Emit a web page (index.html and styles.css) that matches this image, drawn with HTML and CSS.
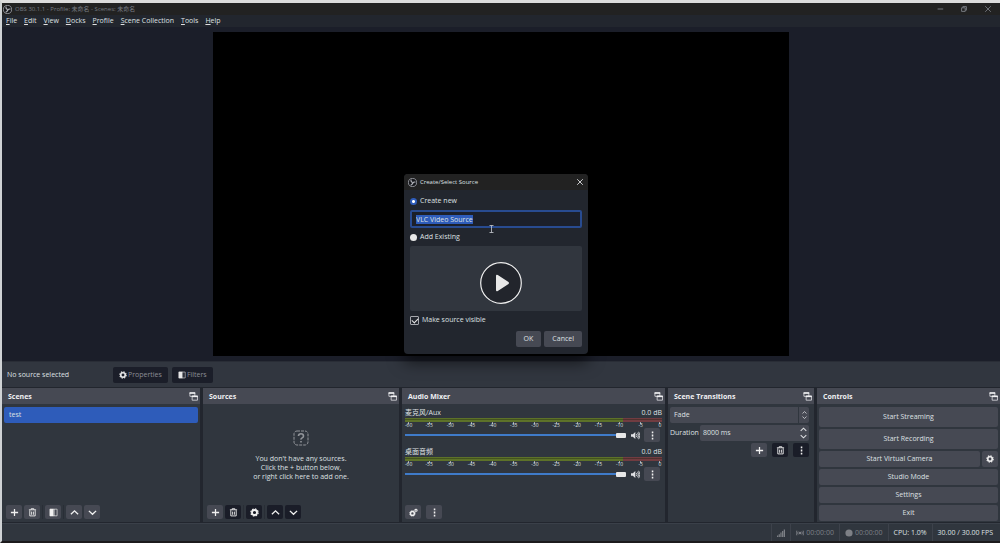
FILE: index.html
```html
<!DOCTYPE html>
<html lang="en">
<head>
    <meta charset="UTF-8">
    <meta name="viewport" content="width=device-width, initial-scale=1.0">
    <title>OBS 30.1.1</title>
    <link rel="stylesheet" href="styles.css">
</head>
<body>

    <!-- shared icons -->
    <svg class="sprite" aria-hidden="true">
        <symbol id="obs" viewBox="0 0 20 20">
            <circle cx="10" cy="10" r="9" fill="#15161a" stroke="currentColor" stroke-width="1.6"/>
            <path d="M7.500 3.500C5.500 6 7 9 10 9.500M16.500 9.500C13.500 8 10.500 9.500 10.500 12.500M5.500 15.500c3 .500 5-2 4-5" fill="none" stroke="currentColor" stroke-width="2.400"/>
        </symbol>
        <symbol id="plus" viewBox="0 0 10 10">
            <path d="M5 1v8M1 5h8" stroke="currentColor" stroke-width="1.400"/>
        </symbol>
        <symbol id="trash" viewBox="0 0 10 10">
            <path d="M1 2h8M3.500 2V.8h3V2M2 2.500v6.300h6V2.500M4 4v3.500M6 4v3.500" fill="none" stroke="currentColor"/>
        </symbol>
        <symbol id="filter" viewBox="0 0 10 10">
            <path d="M1 1h4v8H1z" fill="currentColor"/>
            <path d="M5 1h1.500v8H5z" fill="currentColor" opacity=".5"/>
            <path d="M1 1.300h8v7.400H1z" fill="none" stroke="currentColor" stroke-width=".7"/>
        </symbol>
        <symbol id="up" viewBox="0 0 10 10">
            <path d="M1 7 5 3.200 9 7" fill="none" stroke="currentColor" stroke-width="1.500"/>
        </symbol>
        <symbol id="down" viewBox="0 0 10 10">
            <path d="M1 3.200 5 7l4-3.800" fill="none" stroke="currentColor" stroke-width="1.500"/>
        </symbol>
        <symbol id="gear" viewBox="0 0 10 10">
            <circle cx="5" cy="5" r="2.800" fill="none" stroke="currentColor" stroke-width="2"/>
            <circle cx="5" cy="5" r="4" fill="none" stroke="currentColor" stroke-width="1.400" stroke-dasharray="1.700 1.440"/>
        </symbol>
        <symbol id="gears" viewBox="0 0 10 10">
            <circle cx="3.800" cy="6" r="2.100" fill="none" stroke="currentColor" stroke-width="1.600"/>
            <circle cx="3.800" cy="6" r="3.100" fill="none" stroke="currentColor" stroke-dasharray="1.200 1.230"/>
            <circle cx="7.800" cy="2.500" r="1.200" fill="none" stroke="currentColor" stroke-width="1.200"/>
        </symbol>
        <symbol id="dots" viewBox="0 0 10 10">
            <path d="M4.200.5h1.700v2H4.200zM4.200 4h1.700v2H4.200zM4.200 7.500h1.700v2H4.200z" fill="currentColor"/>
        </symbol>
        <symbol id="float" viewBox="0 0 10 10">
            <path d="M1 .8h5.500v4H1z" fill="none" stroke="currentColor" stroke-width=".8"/>
            <path d="M.6.400h6.300v1.600H.6z" fill="currentColor"/>
            <path d="M3.500 4.500h5.900v4.600H3.500z" fill="#464953" stroke="currentColor" stroke-width=".8"/>
            <path d="M3.100 4.100h6.700v1.600H3.100z" fill="currentColor"/>
        </symbol>
        <symbol id="close" viewBox="0 0 10 10">
            <path d="m1.500 1.500 7 7m0-7-7 7" stroke="currentColor" stroke-width="1.100"/>
        </symbol>
        <symbol id="speaker" viewBox="0 0 10 10">
            <path d="M0 3.500h2L4.800 1v8L2 6.500H0z" fill="currentColor"/>
            <path d="M6 3.300q1.400 1.700 0 3.400M7.300 2q2.500 3 0 6M8.500.9q3 4 0 8.200" fill="none" stroke="currentColor"/>
        </symbol>
    </svg>

    <header class="titlebar">
        <svg class="logo"><use href="#obs"/></svg>
        <span class="window-title">OBS 30.1.1 - Profile: 未命名 - Scenes: 未命名</span>
        <div class="window-buttons">
            <button aria-label="Minimize"><svg viewBox="0 0 10 10"><path d="M2 5h7" stroke="currentColor" stroke-width="1.200"/></svg></button>
            <button aria-label="Restore"><svg viewBox="0 0 10 10"><path d="M2 3.500h4.500V8H2zM3.500 3.500V2H8v4.500H6.500" fill="none" stroke="currentColor" stroke-width="1.200"/></svg></button>
            <button aria-label="Close"><svg><use href="#close"/></svg></button>
        </div>
    </header>

    <nav class="menu">
        <a href="#"><u>F</u>ile</a>
        <a href="#"><u>E</u>dit</a>
        <a href="#"><u>V</u>iew</a>
        <a href="#"><u>D</u>ocks</a>
        <a href="#"><u>P</u>rofile</a>
        <a href="#"><u>S</u>cene Collection</a>
        <a href="#"><u>T</u>ools</a>
        <a href="#"><u>H</u>elp</a>
    </nav>

    <main class="preview">
        <div class="canvas"></div>
    </main>

    <div class="context-bar">
        <span class="context-name">No source selected</span>
        <button class="context-button"><svg><use href="#gear"/></svg>Properties</button>
        <button class="context-button"><svg><use href="#filter"/></svg>Filters</button>
    </div>

    <div class="docks">
        <section class="dock">
            <h2>Scenes <svg><use href="#float"/></svg></h2>
            <ul class="scene-list">
                <li>test</li>
            </ul>
            <div class="toolbar">
                <button class="tool" aria-label="Add scene"><svg><use href="#plus"/></svg></button>
                <button class="tool" aria-label="Remove scene"><svg><use href="#trash"/></svg></button>
                <span class="split"></span>
                <button class="tool" aria-label="Scene filters"><svg><use href="#filter"/></svg></button>
                <span class="split"></span>
                <button class="tool" aria-label="Move up"><svg><use href="#up"/></svg></button>
                <button class="tool" aria-label="Move down"><svg><use href="#down"/></svg></button>
            </div>
        </section>

        <section class="dock">
            <h2>Sources <svg><use href="#float"/></svg></h2>
            <div class="empty">
                <svg viewBox="0 0 16 16">
                    <rect x="1" y="1" width="14" height="14" rx="3" fill="none" stroke="currentColor" stroke-dasharray="3 1"/>
                    <path d="M5.500 6q0-2.300 2.500-2.300T10.500 6q0 1.200-1.300 1.900T8 9.600M8 11v1.600" fill="none" stroke="currentColor" stroke-width="1.600"/>
                </svg>
                <p>You don't have any sources.<br>Click the + button below,<br>or right click here to add one.</p>
            </div>
            <div class="toolbar">
                <button class="tool" aria-label="Add source"><svg><use href="#plus"/></svg></button>
                <button class="tool dark" aria-label="Remove source"><svg><use href="#trash"/></svg></button>
                <span class="split"></span>
                <button class="tool dark" aria-label="Source properties"><svg><use href="#gear"/></svg></button>
                <span class="split"></span>
                <button class="tool dark" aria-label="Move up"><svg><use href="#up"/></svg></button>
                <button class="tool dark" aria-label="Move down"><svg><use href="#down"/></svg></button>
            </div>
        </section>

        <section class="dock">
            <h2>Audio Mixer <svg><use href="#float"/></svg></h2>
            <div class="mixer">
                <div class="channel">
                    <div class="channel-head"><label for="mic">麦克风/Aux</label><span>0.0 dB</span></div>
                    <div class="meter"></div>
                    <div class="scale"><span>-60</span><span>-55</span><span>-50</span><span>-45</span><span>-40</span><span>-35</span><span>-30</span><span>-25</span><span>-20</span><span>-15</span><span>-10</span><span>-5</span><span>0</span></div>
                    <div class="volume">
                        <input type="range" id="mic" value="100">
                        <button class="mute" aria-label="Mute"><svg><use href="#speaker"/></svg></button>
                        <button class="tool" aria-label="Channel options"><svg><use href="#dots"/></svg></button>
                    </div>
                </div>
                <div class="channel">
                    <div class="channel-head"><label for="desktop">桌面音频</label><span>0.0 dB</span></div>
                    <div class="meter"></div>
                    <div class="scale"><span>-60</span><span>-55</span><span>-50</span><span>-45</span><span>-40</span><span>-35</span><span>-30</span><span>-25</span><span>-20</span><span>-15</span><span>-10</span><span>-5</span><span>0</span></div>
                    <div class="volume">
                        <input type="range" id="desktop" value="100">
                        <button class="mute" aria-label="Mute"><svg><use href="#speaker"/></svg></button>
                        <button class="tool" aria-label="Channel options"><svg><use href="#dots"/></svg></button>
                    </div>
                </div>
            </div>
            <div class="toolbar wide">
                <button class="tool" aria-label="Advanced audio"><svg><use href="#gears"/></svg></button>
                <button class="tool" aria-label="Mixer menu"><svg><use href="#dots"/></svg></button>
            </div>
        </section>

        <section class="dock">
            <h2>Scene Transitions <svg><use href="#float"/></svg></h2>
            <div class="transitions">
                <div class="select-box">
                    <select aria-label="Transition">
                        <option>Fade</option>
                    </select>
                    <span class="arrows"><svg><use href="#up"/></svg><svg><use href="#down"/></svg></span>
                </div>
                <div class="duration">
                    <label for="duration">Duration</label>
                    <div class="spin-box">
                        <input type="text" id="duration" value="8000 ms">
                        <span class="arrows"><svg><use href="#up"/></svg><svg><use href="#down"/></svg></span>
                    </div>
                </div>
                <div class="transition-tools">
                    <button class="tool" aria-label="Add transition"><svg><use href="#plus"/></svg></button>
                    <button class="tool dark" aria-label="Remove transition"><svg><use href="#trash"/></svg></button>
                    <button class="tool dark" aria-label="Transition options"><svg><use href="#dots"/></svg></button>
                </div>
            </div>
        </section>

        <section class="dock">
            <h2>Controls <svg><use href="#float"/></svg></h2>
            <div class="controls">
                <button class="tall">Start Streaming</button>
                <button class="tall">Start Recording</button>
                <div class="camera">
                    <button>Start Virtual Camera</button>
                    <button aria-label="Virtual camera settings"><svg><use href="#gear"/></svg></button>
                </div>
                <button>Studio Mode</button>
                <button>Settings</button>
                <button>Exit</button>
            </div>
        </section>
    </div>

    <footer class="status">
        <span class="muted"><svg viewBox="0 0 10 10"><path d="M0 8h1.500v2H0zM2.100 6.500h1.500V10H2.100zM4.200 4.500h1.500V10H4.200zM6.300 2.500h1.500V10H6.300zM8.400.5H10V10H8.400z" fill="currentColor"/></svg></span>
        <span class="muted"><svg viewBox="0 0 10 10"><circle cx="5" cy="5" r="1.700" fill="currentColor"/><path d="M2.700 3q-1.500 2 0 4M7.300 3q1.500 2 0 4M1 2q-1.500 3 0 6M9 2q1.500 3 0 6" fill="none" stroke="currentColor"/></svg>00:00:00</span>
        <span class="muted"><svg viewBox="0 0 10 10"><circle cx="5" cy="5" r="4.500" fill="currentColor"/></svg>00:00:00</span>
        <span>CPU: 1.0%</span>
        <span>30.00 / 30.00 FPS</span>
    </footer>

    <form class="dialog" role="dialog" aria-labelledby="dialog-title">
        <div class="dialog-title">
            <svg class="logo"><use href="#obs"/></svg>
            <span id="dialog-title">Create/Select Source</span>
            <button type="button" aria-label="Close dialog"><svg><use href="#close"/></svg></button>
        </div>
        <div class="dialog-body">
            <label class="choice"><input type="radio" name="mode" checked>Create new</label>
            <div class="name-field">
                <input type="text" aria-label="Source name" value="VLC Video Source" id="source-name">
            </div>
            <label class="choice"><input type="radio" name="mode">Add Existing</label>
            <div class="existing">
                <svg viewBox="0 0 42 42">
                    <circle cx="21" cy="21" r="20.300" fill="#22252c" stroke="#f0f0f0" stroke-width="1.200"/>
                    <path d="M16 14q0-2 1.800-1L28.500 20q1.200 1 0 2l-10.700 7q-1.800 1-1.800-1z" fill="#e8e8e8"/>
                </svg>
            </div>
            <label class="choice visible"><input type="checkbox" checked>Make source visible</label>
            <div class="dialog-buttons">
                <button type="button">OK</button>
                <button type="button">Cancel</button>
            </div>
        </div>
        <svg class="cursor" viewBox="0 0 5 8"><path d="M.5.500h4M2.500.500v7M.5 7.500h4" stroke="#c8cbd2" stroke-width=".8"/></svg>
    </form>

    <script>
        onload=function(){
            document.getElementById("source-name").select();
        }
    </script>
</body>
</html>
```
FILE: styles.css
```css
* {
    box-sizing: border-box;
}

body {
    font-family: "Open Sans", "Noto Sans CJK SC", sans-serif;
    font-size: 7px;
    line-height: 10px;
    margin: 0;
    height: 100vh;
    display: flex;
    flex-direction: column;
    background-color: #22262e;
    color: #dfe0e3;
    border-top: 3px solid #dcdcdc;
    border-left: 2px solid #cfd2d4;
    border-bottom: 2px solid #1c1a1c;
    overflow: hidden;
}

button, input, select {
    font: inherit;
    color: inherit;
    border: none;
    margin: 0;
    padding: 0;
    background: none;
}

button {
    display: flex;
    align-items: center;
    justify-content: center;
}

svg {
    width: 9px;
    height: 9px;
    flex: none;
}

.sprite {
    position: absolute;
    width: 0;
    height: 0;
}

/* Title bar and menu */
.titlebar {
    display: flex;
    align-items: center;
    height: 12px;
    padding-left: 1px;
    gap: 3px;
    font-size: 6px;
    background-color: #222222;
    color: #777b82;
}

.logo {
    width: 9px;
    height: 9px;
    color: #b8bac0;
}

.window-buttons {
    display: flex;
    gap: 16px;
    margin-left: auto;
    padding-right: 8px;
}

.window-buttons svg {
    width: 8px;
    height: 8px;
}

.menu {
    display: flex;
    align-items: center;
    height: 12px;
    padding-left: 4px;
    gap: 7px;
    background-color: #22262e;
}

.menu a {
    color: inherit;
    text-decoration: none;
}

/* Preview */
.preview {
    flex: 1;
    min-height: 0;
    display: flex;
    justify-content: center;
    padding: 5px 0;
    background-color: #1b1e29;
}

.canvas {
    height: 100%;
    aspect-ratio: 16 / 9;
    background-color: #000;
}

.context-bar {
    display: flex;
    align-items: center;
    height: 26px;
    padding-left: 5px;
    gap: 4px;
    background-color: #31363f;
    border-top: 1px solid #292d36;
}

.context-name {
    width: 102px;
}

.context-button {
    height: 16px;
    padding: 0 6px;
    gap: 1px;
    border-radius: 2px;
    background-color: #1b1e29;
    color: #8b8e95;
}

.context-button svg {
    width: 8px;
    height: 8px;
    color: #e8e8e8;
}

/* Docks */
.docks {
    display: grid;
    grid-template-columns: 198fr 196fr 263fr 146fr 183fr;
    gap: 3px;
    height: 136px;
    padding: 1px 0;
}

.dock {
    display: flex;
    flex-direction: column;
    min-width: 0;
    background-color: #30363e;
}

.dock h2 {
    display: flex;
    align-items: center;
    justify-content: space-between;
    height: 16px;
    margin: 0;
    padding: 1px 2px 0 6px;
    font-size: 7px;
    font-weight: 700;
    background-color: #464953;
    color: #f0f0f2;
}

.scene-list {
    flex: 1;
    margin: 0;
    padding: 3px 2px;
    list-style: none;
}

.scene-list li {
    height: 16px;
    padding: 3px 5px;
    border-radius: 2px;
    background-color: #2e5cba;
}

.toolbar {
    display: flex;
    align-items: center;
    gap: 2px;
    padding: 0 4px 3px;
}

.toolbar.wide {
    gap: 5px;
    padding-left: 3px;
}

.tool {
    width: 16px;
    height: 14px;
    border-radius: 2px;
    background-color: #464953;
    color: #f0f0f0;
}

.tool.dark {
    background-color: #1a1d28;
}

.split {
    width: 1px;
    height: 14px;
    background-color: #292e36;
}

.empty {
    flex: 1;
    display: flex;
    flex-direction: column;
    align-items: center;
    justify-content: center;
    padding-top: 2px;
    text-align: center;
}

.empty svg {
    width: 16px;
    height: 16px;
    color: #92959a;
}

.empty p {
    margin: 8px 0 0;
    line-height: 9px;
}

/* Audio mixer */
.mixer {
    flex: 1;
    padding: 4px 3px 0;
}

.channel {
    height: 39px;
}

.channel-head {
    display: flex;
    justify-content: space-between;
}

.meter {
    height: 4px;
    background:
        linear-gradient(transparent 1px, rgba(20, 28, 10, 0.35) 1px, rgba(20, 28, 10, 0.35) 2px, transparent 2px),
        linear-gradient(90deg, #5d7229 85%, #713c41 85%);
}

.scale {
    display: flex;
    justify-content: space-between;
    height: 6px;
    font-size: 5px;
    line-height: 7px;
}

.scale span {
    width: 8px;
    text-align: center;
    background: linear-gradient(#a0a3a8, #a0a3a8) center top / 1px 2px no-repeat;
}

.scale span:first-child {
    width: 7px;
}

.scale span:last-child {
    width: 4px;
}

.volume {
    display: flex;
    align-items: center;
    height: 14px;
    padding-right: 2px;
}

.volume input {
    flex: 1;
    min-width: 0;
    height: 5px;
    appearance: none;
    background: linear-gradient(#3f7bc9, #3f7bc9) center / 100% 2px no-repeat;
}

.volume input::-webkit-slider-thumb {
    appearance: none;
    width: 10px;
    height: 5px;
    border-radius: 1px;
    background-color: #e8e8e8;
}

.mute {
    width: 18px;
}

/* Transitions */
.transitions {
    display: flex;
    flex-direction: column;
    gap: 2px;
    padding: 3px 5px 0 2px;
}

.select-box, .spin-box {
    display: flex;
    align-items: center;
    height: 16px;
    border-radius: 2px;
    background-color: #464953;
}

.select-box select {
    flex: 1;
    height: 16px;
    padding-left: 4px;
    appearance: none;
    border-right: 1px solid #30363e;
}

.arrows {
    display: flex;
    flex-direction: column;
    align-items: center;
    width: 10px;
}

.arrows svg {
    width: 5px;
    height: 5px;
}

.duration {
    display: flex;
    align-items: center;
    gap: 1px;
}

.spin-box {
    flex: 1;
    min-width: 0;
}

.spin-box input {
    flex: 1;
    min-width: 0;
    padding-left: 3px;
}

.spin-box .arrows {
    width: 12px;
}

.spin-box svg {
    width: 7px;
    height: 7px;
}

.transition-tools {
    display: flex;
    justify-content: flex-end;
    gap: 5px;
}

/* Controls */
.controls {
    display: flex;
    flex-direction: column;
    gap: 2px;
    padding: 3px 2px 0;
}

.controls button {
    height: 16px;
    border-radius: 2px;
    background-color: #464953;
}

.controls .tall {
    height: 20px;
}

.camera {
    display: grid;
    grid-template-columns: 1fr 16px;
    gap: 2px;
}

.camera svg {
    width: 8px;
    height: 8px;
    color: #f0f0f0;
}

/* Status bar */
.status {
    display: flex;
    justify-content: flex-end;
    height: 18px;
    padding-right: 2px;
    background-color: #30363e;
    border-top: 1px solid #3a4049;
}

.status span {
    display: flex;
    align-items: center;
    gap: 2px;
    padding: 0 5px;
    border-left: 1px solid #3d424b;
}

.status .muted {
    color: #7d8086;
}

.status svg {
    width: 8px;
    height: 8px;
}

/* Create source dialog */
.dialog {
    position: absolute;
    left: calc(50% - 96px);
    top: 174px;
    width: 184px;
    border-radius: 4px;
    overflow: hidden;
    background-color: #22262e;
    box-shadow: 0 8px 16px rgba(0, 0, 0, 0.6);
}

.dialog-title {
    display: flex;
    align-items: center;
    height: 16px;
    padding: 0 4px;
    gap: 3px;
    font-size: 6px;
    background-color: #222222;
}

.dialog-title button {
    margin-left: auto;
}

.dialog-title button svg {
    width: 8px;
    height: 8px;
}

.dialog-body {
    padding: 5px 6px 7px;
}

.choice {
    display: flex;
    align-items: center;
    gap: 3px;
    height: 12px;
}

.choice input {
    appearance: none;
    width: 7px;
    height: 7px;
    border-radius: 50%;
    background-color: #e8e8e8;
}

.choice input[type="radio"]:checked {
    background: radial-gradient(circle, #fff 1px, #2e5cba 2px);
}

.choice input[type="checkbox"] {
    position: relative;
    width: 9px;
    height: 9px;
    border: 1px solid #a5a7ac;
    border-radius: 1px;
    background: none;
}

.choice input[type="checkbox"]::after {
    content: "";
    position: absolute;
    left: 1px;
    top: 1px;
    width: 5px;
    height: 3px;
    border-left: 1px solid #e8e8e8;
    border-bottom: 1px solid #e8e8e8;
    transform: rotate(-45deg);
}

.name-field {
    margin: 3px 0;
}

.name-field input {
    display: block;
    width: 100%;
    height: 18px;
    padding: 0 4px;
    border: 2px solid #284b90;
    border-radius: 2px;
    outline: none;
    background-color: #1c202a;
}

.name-field input::selection {
    background-color: #2e5cba;
    color: #dfe0e3;
}

.existing {
    display: flex;
    align-items: flex-end;
    justify-content: center;
    height: 65px;
    margin-top: 3px;
    padding: 0 0 7px 10px;
    border-radius: 2px;
    background-color: #31363e;
}

.existing svg {
    width: 42px;
    height: 42px;
}

.visible {
    height: 18px;
}

.dialog-buttons {
    display: flex;
    justify-content: flex-end;
    gap: 3px;
    padding-top: 2px;
}

.dialog-buttons button {
    height: 16px;
    padding: 0 8px;
    border-radius: 2px;
    background-color: #464953;
}

.cursor {
    position: absolute;
    left: 85px;
    top: 51px;
    width: 5px;
    height: 8px;
}
```
